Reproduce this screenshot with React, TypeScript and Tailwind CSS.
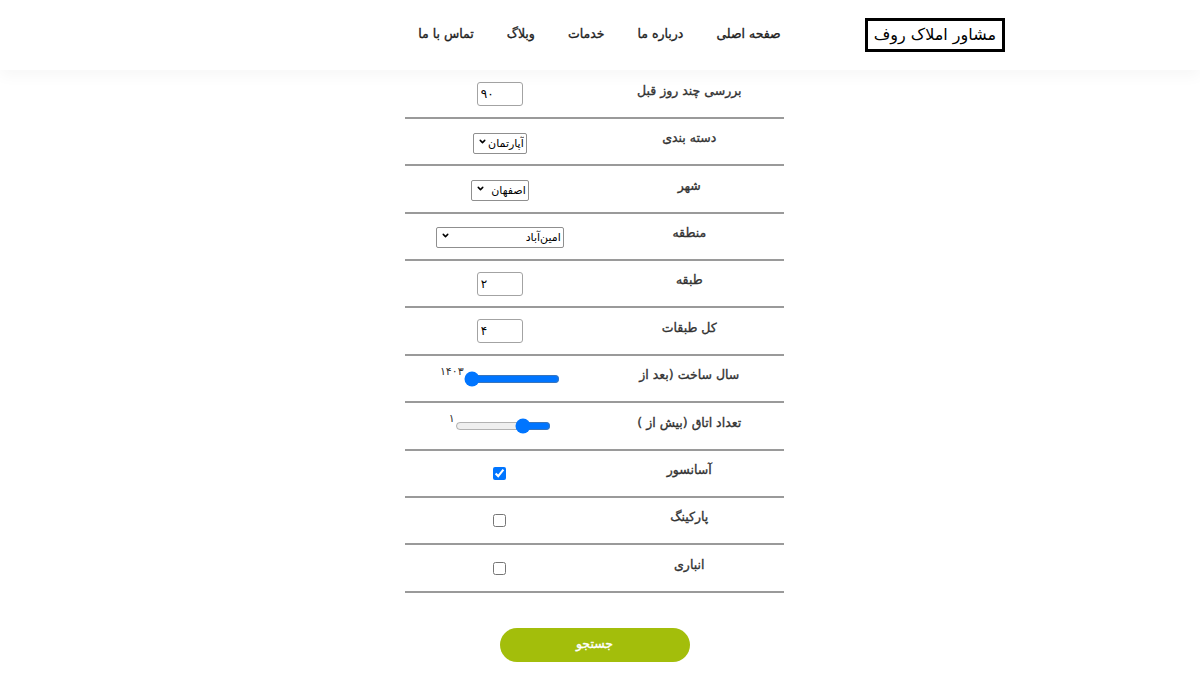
import { ChevronDown } from "lucide-react";

const navItems = ["صفحه اصلی", "درباره ما", "خدمات", "وبلاگ", "تماس با ما"];

function Row({ label, children }: { label: string; children: React.ReactNode }) {
  return (
    <div className="flex h-[47.4px] items-center border-b-2 border-[#9a9a9a]">
      <div className="flex w-1/2 justify-center pb-[6px] text-[12.5px] text-[#333] [-webkit-text-stroke:0.35px_#333]">
        {label}
      </div>
      <div className="flex w-1/2 items-center justify-center">{children}</div>
    </div>
  );
}

function TextBox({ value }: { value: string }) {
  return (
    <input
      type="text"
      defaultValue={value}
      className="h-[24px] w-[46px] rounded-[3px] border border-[#a3a3a3] px-[3px] text-left text-[12px] text-black"
    />
  );
}

function Select({ value, width }: { value: string; width: string }) {
  return (
    <div className={`relative ${width}`}>
      <select
        defaultValue={value}
        className="h-[21px] w-full appearance-none rounded-[2px] border border-[#8f8f8f] bg-white pr-[2px] pl-[14px] text-[11px] leading-[19px] text-black"
      >
        <option>{value}</option>
      </select>
      <ChevronDown
        className="pointer-events-none absolute top-[7px] left-[5px] h-[9px] w-[9px] text-black"
        strokeWidth={4}
      />
    </div>
  );
}

function Slider({ note, min, max, value }: { note: string; min: number; max: number; value: number }) {
  return (
    <div className="flex items-start">
      <input
        type="range"
        min={min}
        max={max}
        defaultValue={value}
        className="mt-[1px] w-[96px] accent-[#0075ff]"
      />
      <span className="-mt-[4px] text-[11px] leading-none text-[#333]">{note}</span>
    </div>
  );
}

export default function App() {
  return (
    <div dir="rtl" className="min-h-[675px] bg-white font-['DejaVu_Sans',sans-serif]">
      <header className="relative z-10 flex h-[70px] items-center bg-white pr-[195px] shadow-[0_6px_14px_rgba(0,0,0,0.035)]">
        <div className="-mt-[1px] border-[3px] border-black px-[6px] py-[3px] text-[16px] leading-[22px] text-black">
          مشاور املاک روف
        </div>
        <nav className="mr-[84px] -mt-[2px] flex gap-[33px] text-[12.5px] text-[#222] [-webkit-text-stroke:0.35px_#222]">
          {navItems.map((item) => (
            <span key={item}>{item}</span>
          ))}
        </nav>
      </header>

      <main className="mt-[1.5px] mr-[416px] w-[379px]">
        <Row label="بررسی چند روز قبل">
          <TextBox value="۹۰" />
        </Row>
        <Row label="دسته بندی">
          <Select value="آپارتمان" width="w-[54px]" />
        </Row>
        <Row label="شهر">
          <Select value="اصفهان" width="w-[58px]" />
        </Row>
        <Row label="منطقه">
          <Select value="امین‌آباد" width="w-[128px]" />
        </Row>
        <Row label="طبقه">
          <TextBox value="۲" />
        </Row>
        <Row label="کل طبقات">
          <TextBox value="۴" />
        </Row>
        <Row label="سال ساخت (بعد از">
          <Slider note="۱۴۰۳" min={1370} max={1403} value={1403} />
        </Row>
        <Row label="تعداد اتاق (بیش از )">
          <Slider note="۱" min={0} max={4} value={1} />
        </Row>
        <Row label="آسانسور">
          <input type="checkbox" defaultChecked className="h-[13px] w-[13px] accent-[#0075ff]" />
        </Row>
        <Row label="پارکینگ">
          <input type="checkbox" className="h-[13px] w-[13px]" />
        </Row>
        <Row label="انباری">
          <input type="checkbox" className="h-[13px] w-[13px]" />
        </Row>

        <div className="flex justify-center pt-[35px]">
          <button
            type="button"
            className="h-[34px] w-[190px] rounded-full bg-[#a3be0b] text-[12.5px] text-white [-webkit-text-stroke:0.35px_#fff]"
          >
            جستجو
          </button>
        </div>
      </main>
    </div>
  );
}
